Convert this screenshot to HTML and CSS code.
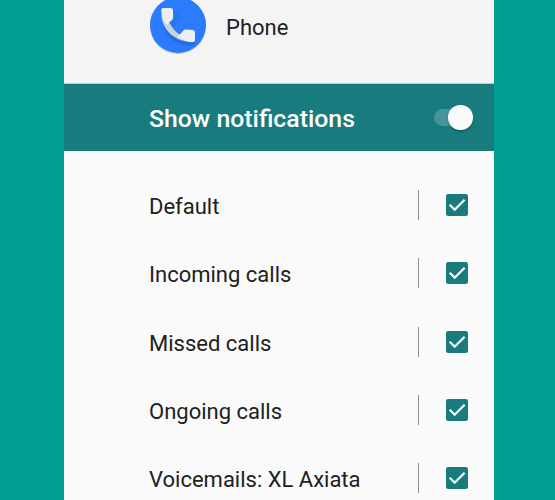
FILE: index.html
```html
<!DOCTYPE html>
<html lang="en">
<head>
<meta charset="utf-8">
<title>Phone notifications</title>
<link rel="stylesheet" href="styles.css">
</head>
<body>
<main class="screen">
  <header class="app-header">
    <svg class="app-icon" viewBox="0 0 60 60" aria-hidden="true">
      <circle class="icon-shadow" cx="30" cy="31" r="28"/>
      <circle class="icon-disc" cx="30" cy="30" r="28"/>
      <path class="icon-shade-soft" d="M25 15L32 21Q32 26 25 31L21 28Z"/>
      <path class="icon-shade" d="M14 24Q18 39 30 45Q38 48 47 46.500V50Q36 52 27 47Q16 40 14 24Z"/>
      <path class="icon-curve" d="M13.200 19C14 36 28 47 45 47L38 40L32.500 40Q26 36.500 21.500 28L18 21Z"/>
      <path class="icon-end" d="M15 13H23Q24.500 13 25 15L25.200 22Q25.200 24 24 25L18.500 30Q14 24 13.200 15.500Q13 13 15 13Z"/>
      <path class="icon-end" d="M29.500 42L35 36Q36 34.500 38 34.600L45 35Q47 35.300 47 37.500V45Q47 47 45 47Q37 47 29.500 42Z"/>
    </svg>
    <h1 class="app-name">Phone</h1>
  </header>
  <section class="master">
    <span class="master-label">Show notifications</span>
    <span class="switch"><span class="thumb"></span></span>
  </section>
  <ul class="channels">
    <li class="channel"><span class="label">Default</span><span class="divider"></span><svg class="check" viewBox="0 0 22 22"><rect width="22" height="22" rx="2.200"/><path d="M3.700 10.700L8.700 15.700L18.600 5.800"/></svg></li>
    <li class="channel"><span class="label">Incoming calls</span><span class="divider"></span><svg class="check" viewBox="0 0 22 22"><rect width="22" height="22" rx="2.200"/><path d="M3.700 10.700L8.700 15.700L18.600 5.800"/></svg></li>
    <li class="channel"><span class="label">Missed calls</span><span class="divider"></span><svg class="check" viewBox="0 0 22 22"><rect width="22" height="22" rx="2.200"/><path d="M3.700 10.700L8.700 15.700L18.600 5.800"/></svg></li>
    <li class="channel"><span class="label">Ongoing calls</span><span class="divider"></span><svg class="check" viewBox="0 0 22 22"><rect width="22" height="22" rx="2.200"/><path d="M3.700 10.700L8.700 15.700L18.600 5.800"/></svg></li>
    <li class="channel"><span class="label">Voicemails: XL Axiata</span><span class="divider"></span><svg class="check" viewBox="0 0 22 22"><rect width="22" height="22" rx="2.200"/><path d="M3.700 10.700L8.700 15.700L18.600 5.800"/></svg></li>
  </ul>
</main>
</body>
</html>
```
FILE: styles.css
```css
* { box-sizing: border-box; }
body {
  margin: 0;
  height: 500px;
  overflow: hidden;
  background: #009e93;
  color: #212121;
  font-family: Roboto, sans-serif;
  font-size: 22px;
}
.screen {
  width: 430px;
  height: 500px;
  margin-left: 64px;
  overflow: hidden;
  background: #fafafa;
}
.app-header {
  display: flex;
  align-items: flex-start;
  height: 84px;
  padding-left: 84px;
  background: #f4f4f4;
  border-bottom: 1px solid #b9d0d0;
}
.app-icon {
  flex: none;
  width: 60px;
  height: 60px;
  margin-top: -5px;
}
.icon-shadow { fill: #b8bdc8; }
.icon-disc { fill: #2b7bff; }
.icon-shade { fill: #2a6be0; }
.icon-shade-soft { fill: #2a74f0; }
.icon-curve { fill: #c9d4d9; }
.icon-end { fill: #eceff1; }
.app-name {
  margin: 14px 0 0 18px;
  font-size: 22px;
  font-weight: 400;
  line-height: 28px;
}
.master {
  display: flex;
  align-items: center;
  justify-content: space-between;
  height: 67px;
  padding: 0 21.500px 0 85px;
  background: #187b7e;
  color: #fff;
}
.master-label {
  padding-top: 2px;
  font-size: 24.800px;
  font-weight: 500;
  line-height: 30px;
}
.switch {
  display: flex;
  align-items: center;
  justify-content: flex-end;
  width: 38.500px;
  height: 17px;
  border-radius: 9px;
  background: #46959a;
}
.thumb {
  flex: none;
  width: 24.500px;
  height: 24.500px;
  border-radius: 50%;
  background: #fafafa;
  box-shadow: 0 2px 2px rgba(0, 45, 50, .35);
}
.channels {
  margin: 0;
  padding: 19.600px 0 0;
  list-style: none;
}
.channel {
  display: flex;
  align-items: center;
  height: 68.400px;
  padding: 0 26px 0 85px;
}
.label {
  flex: 1;
  line-height: 28px;
  padding-top: 4px;
}
.divider {
  width: 1px;
  height: 30px;
  margin-right: 27px;
  background: #8c8c8c;
}
.check {
  width: 22px;
  height: 22px;
}
.check rect { fill: #187b7e; }
.check path {
  fill: none;
  stroke: #fafafa;
  stroke-width: 2.300;
}
```
